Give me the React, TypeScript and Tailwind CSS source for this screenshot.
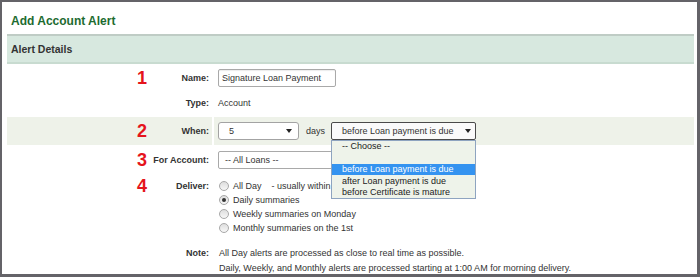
import React from "react";

const Tri = () => (
  <svg width="6" height="4" viewBox="0 0 6 4" className="block">
    <path d="M0 0H6L3 4Z" fill="#222" />
  </svg>
);

function LabelCell({
  n,
  label,
  cls,
}: {
  n?: string;
  label: string;
  cls: string;
}) {
  return (
    <div className={`w-[205px] shrink-0 flex items-center ${cls}`}>
      <div className="w-[130px] shrink-0" />
      <div className="w-[16px] shrink-0 text-[18px] font-bold leading-none text-[#e5141c]">
        {n}
      </div>
      <div className="flex-1 text-right pr-[3px] font-bold text-[#333]">{label}</div>
    </div>
  );
}

function Radio({ checked, children }: { checked?: boolean; children: React.ReactNode }) {
  return (
    <div className="h-[14px] flex items-center whitespace-nowrap">
      <span className="ml-[1px] mr-[4px] w-[10px] h-[10px] shrink-0 rounded-full border border-[#a8a8a8] bg-gradient-to-b from-[#dedede] to-[#f7f7f7] flex items-center justify-center">
        {checked && <span className="w-[4px] h-[4px] rounded-full bg-[#333]" />}
      </span>
      <span>{children}</span>
    </div>
  );
}

export default function App() {
  return (
    <div className="w-[700px] h-[277px] overflow-hidden bg-white border-solid border-[#646368] border-t-2 border-l-2 border-r-[3px] border-b-[3px] font-['Liberation_Sans',Arial,sans-serif] text-[9px] text-[#333] leading-[11px]">
      <div className="pl-[5px] pr-[3px]">
        {/* Title */}
        <div className="h-[32px] pt-[12px] pl-[4px] text-[12px] leading-[14px] font-bold text-[#1d6b30]">
          Add Account Alert
        </div>
        {/* Section header */}
        <div className="h-[30px] border-t-2 border-[#bfccc5] border-b-2 border-b-[#c8dbd0] bg-[#d7e8df] flex items-center pl-[4px] text-[10.5px] font-bold text-[#333]">
          Alert Details
        </div>

        {/* Name */}
        <div className="mt-[2px] h-[24px] flex">
          <LabelCell n="1" label="Name:" cls="h-full" />
          <div className="ml-[2px] pl-[4px] flex-1 flex items-center">
            <div className="w-[118px] h-[18px] border border-[#a9a9a9] rounded-[2px] bg-white flex items-center pl-[3px] shadow-[inset_0_1px_1px_rgba(0,0,0,0.08)]">
              Signature Loan Payment
            </div>
          </div>
        </div>

        {/* Type */}
        <div className="mt-[1px] h-[24px] flex">
          <LabelCell label="Type:" cls="h-full" />
          <div className="ml-[2px] pl-[4px] flex-1 flex items-center">Account</div>
        </div>

        {/* When */}
        <div className="mt-[2px] h-[28px] flex">
          <LabelCell n="2" label="When:" cls="h-full bg-[#eef2e9]" />
          <div className="ml-[2px] pl-[4px] flex-1 flex items-center bg-[#eef2e9]">
            <div className="w-[81px] h-[18px] border border-[#a3a3a3] rounded-[3px] bg-white flex items-center justify-between pl-[10px] pr-[6px]">
              <span>5</span>
              <Tri />
            </div>
            <span className="ml-[7px]">days</span>
            <div className="relative ml-[6px]">
              <div className="w-[145px] h-[18px] border border-[#4a4a4a] rounded-[2px] bg-[#fafafa] flex items-center justify-between pl-[10px] pr-[4px]">
                <span>before Loan payment is due</span>
                <Tri />
              </div>
              <div className="absolute left-0 top-full z-10 w-[145px] border border-[#8ea4c0] bg-[#eef3ea] text-[#222]">
                <div className="h-[11px] flex items-center pl-[10px]">-- Choose --</div>
                <div className="h-[12px]" />
                <div className="h-[11px] flex items-center pl-[10px] bg-[#3493f0] text-white">
                  before Loan payment is due
                </div>
                <div className="h-[12px] flex items-center pl-[10px]">after Loan payment is due</div>
                <div className="h-[11px] flex items-center pl-[10px]">before Certificate is mature</div>
              </div>
            </div>
          </div>
        </div>

        {/* For Account */}
        <div className="mt-[2px] h-[26px] flex">
          <LabelCell n="3" label="For Account:" cls="h-full" />
          <div className="ml-[2px] pl-[4px] flex-1 flex items-center">
            <div className="w-[150px] h-[18px] border border-[#a9a9a9] rounded-[2px] bg-white flex items-center pl-[6px]">
              -- All Loans --
            </div>
          </div>
        </div>

        {/* Deliver */}
        <div className="mt-[6px] flex items-start">
          <LabelCell n="4" label="Deliver:" cls="h-[14px]" />
          <div className="ml-[2px] pl-[4px] flex-1 flex flex-col">
            <Radio>
              All Day<span className="ml-[10px]">- usually within</span>
            </Radio>
            <Radio checked>Daily summaries</Radio>
            <Radio>Weekly summaries on Monday</Radio>
            <Radio>Monthly summaries on the 1st</Radio>
          </div>
        </div>

        {/* Note */}
        <div className="mt-[11px] flex items-start">
          <LabelCell label="Note:" cls="h-[14.5px]" />
          <div className="ml-[2px] pl-[5px] flex-1 leading-[14.5px]">
            <div>All Day alerts are processed as close to real time as possible.</div>
            <div>
              Daily, Weekly, and Monthly alerts are processed starting at 1:00 AM for morning
              delivery.
            </div>
          </div>
        </div>
      </div>
    </div>
  );
}
